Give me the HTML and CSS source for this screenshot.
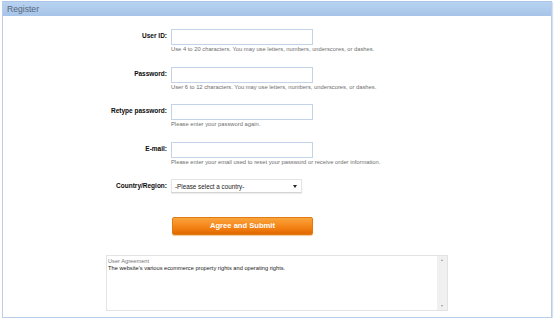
FILE: index.html
```html
<!DOCTYPE html>
<html>
<head>
<meta charset="utf-8">
<link rel="stylesheet" href="styles.css">
</head>
<body>
<div class="panel">
  <div class="panel-head">Register</div>
  <form class="form">
    <div class="row">
      <label class="lbl">User ID:</label>
      <div class="field">
        <div class="txt"></div>
        <div class="hint">Use 4 to 20 characters. You may use letters, numbers, underscores, or dashes.</div>
      </div>
    </div>
    <div class="row">
      <label class="lbl">Password:</label>
      <div class="field">
        <div class="txt"></div>
        <div class="hint">User 6 to 12 characters. You may use letters, numbers, underscores, or dashes.</div>
      </div>
    </div>
    <div class="row">
      <label class="lbl">Retype password:</label>
      <div class="field">
        <div class="txt"></div>
        <div class="hint">Please enter your password again.</div>
      </div>
    </div>
    <div class="row">
      <label class="lbl">E-mail:</label>
      <div class="field">
        <div class="txt"></div>
        <div class="hint">Please enter your email used to reset your password or receive order information.</div>
      </div>
    </div>
    <div class="row row-select">
      <label class="lbl">Country/Region:</label>
      <div class="field">
        <div class="select"><span>-Please select a country-</span><span class="caret"></span></div>
      </div>
    </div>
    <div class="actions">
      <div class="btn">Agree and Submit</div>
    </div>
    <div class="agreement">
      <div class="agree-text">
        <div class="agree-title">User Agreement</div>
        <div class="agree-body">The website's various ecommerce property rights and operating rights.</div>
      </div>
      <div class="scroll">
        <span class="arr up"></span>
        <span class="arr down"></span>
      </div>
    </div>
  </form>
</div>
</body>
</html>
```
FILE: styles.css
```css
html, body {
  margin: 0;
  padding: 0;
  background: #ffffff;
  font-family: "Liberation Sans", Arial, sans-serif;
}
.panel {
  margin: 1px 2px 0 2px;
  width: 548px;
  border: 1px solid #b7cde8;
  border-top-color: #a9c6e9;
  box-shadow: 1px 1px 1px #d6e2f0;
  background: #fff;
}
.panel-head {
  height: 14px;
  line-height: 14px;
  background: linear-gradient(#b8d2f0, #a6c4e8);
  color: #56677a;
  font-size: 8.6px;
  padding-left: 4px;
}
.form {
  display: flex;
  flex-direction: column;
  padding: 13px 0 6px 0;
}
.row {
  display: flex;
  align-items: flex-start;
  margin-bottom: 13.5px;
}
.row-select {
  margin-bottom: 0;
  align-items: center;
}
.lbl {
  width: 168px;
  flex: none;
  text-align: right;
  font-weight: bold;
  font-size: 6.5px;
  color: #0a0a0a;
  padding-right: 4px;
  box-sizing: border-box;
  line-height: 14px;
}
.field {
  display: flex;
  flex-direction: column;
}
.txt {
  width: 142px;
  height: 16px;
  box-sizing: border-box;
  border: 1px solid #c3d4e9;
  background: #fff;
}
.hint {
  font-size: 5.8px;
  line-height: 8px;
  color: #6e6e6e;
  white-space: nowrap;
}
.select {
  width: 131px;
  height: 14px;
  box-sizing: border-box;
  border: 1px solid #e4e4e4;
  border-bottom-color: #d4d4d4;
  box-shadow: 0 1px 1px #eeeeee;
  display: flex;
  align-items: center;
  justify-content: space-between;
  padding: 0 4px 0 3px;
  font-size: 6.3px;
  color: #222;
}
.caret {
  width: 0;
  height: 0;
  border-left: 2.5px solid transparent;
  border-right: 2.5px solid transparent;
  border-top: 3px solid #222;
}
.actions {
  margin: 24px 0 0 169px;
}
.btn {
  width: 141px;
  height: 18px;
  box-sizing: border-box;
  border-radius: 2px;
  background: linear-gradient(#f9a43c 0%, #f68a1e 45%, #f07b0e 70%, #e06800 100%);
  border: 1px solid #e07a12;
  box-shadow: 0 1px 1px #f3c796;
  color: #fff;
  font-weight: bold;
  font-size: 7.6px;
  line-height: 16px;
  text-align: center;
}
.agreement {
  margin: 20px 0 0 103px;
  width: 342px;
  height: 56px;
  box-sizing: border-box;
  border: 1px solid #e3e3e3;
  display: flex;
}
.agree-text {
  flex: 1;
  padding: 2px 0 0 1px;
}
.agree-title {
  font-size: 5.7px;
  color: #777;
  line-height: 7px;
}
.agree-body {
  font-size: 5.7px;
  color: #222;
  line-height: 7px;
}
.scroll {
  width: 10px;
  background: #f0f0f0;
  display: flex;
  flex-direction: column;
  justify-content: space-between;
  align-items: center;
  padding: 3px 0;
  box-sizing: border-box;
}
.arr {
  width: 0;
  height: 0;
  border-left: 1.5px solid transparent;
  border-right: 1.5px solid transparent;
}
.arr.up {
  border-bottom: 2px solid #999;
}
.arr.down {
  border-top: 2px solid #999;
}
```
